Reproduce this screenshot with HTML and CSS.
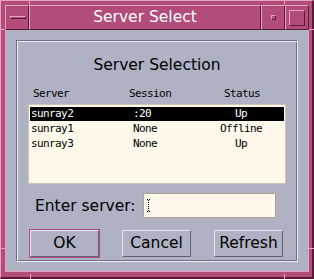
FILE: index.html
```html
<!DOCTYPE html>
<html>
<head>
<meta charset="utf-8">
<link rel="stylesheet" href="styles.css">
</head>
<body>
<div class="frame">
  <div class="titlebar">
    <div class="seg menu"><span class="menu-bar"></span></div>
    <div class="seg title">Server Select</div>
    <div class="seg min"><span class="min-icon"></span></div>
    <div class="seg max"><span class="max-icon"></span></div>
  </div>
  <div class="client">
    <div class="group">
      <div class="heading">Server Selection</div>
      <div class="table">
        <div class="thead"><span>Server</span><span>Session</span><span class="st">Status</span></div>
        <div class="list">
          <div class="row sel"><span>sunray2</span><span>:20</span><span class="st">Up</span></div>
          <div class="row"><span>sunray1</span><span>None</span><span class="st">Offline</span></div>
          <div class="row"><span>sunray3</span><span>None</span><span class="st">Up</span></div>
        </div>
      </div>
      <div class="enter">
        <span class="label">Enter server:</span>
        <div class="input">
          <svg class="caret" width="5" height="13" viewBox="0 0 5 13">
            <rect x="1" y="0" width="1" height="1" fill="#000"/>
            <rect x="3" y="0" width="1" height="1" fill="#000"/>
            <rect x="2" y="1" width="1" height="1" fill="#000"/>
            <rect x="2" y="3" width="1" height="1" fill="#000"/>
            <rect x="2" y="5" width="1" height="1" fill="#000"/>
            <rect x="2" y="7" width="1" height="1" fill="#000"/>
            <rect x="2" y="9" width="1" height="1" fill="#000"/>
            <rect x="2" y="11" width="1" height="1" fill="#000"/>
            <rect x="1" y="12" width="1" height="1" fill="#000"/>
            <rect x="3" y="12" width="1" height="1" fill="#000"/>
          </svg>
        </div>
      </div>
      <div class="buttons">
        <div class="default"><button class="btn">OK</button></div>
        <button class="btn">Cancel</button>
        <button class="btn refresh">Refresh</button>
      </div>
    </div>
  </div>
  <span class="notch v n-top1"></span>
  <span class="notch v n-top2"></span>
  <span class="notch h n-left1"></span>
  <span class="notch h n-left2"></span>
  <span class="notch h n-right1"></span>
  <span class="notch h n-right2"></span>
  <span class="notch v n-bot1"></span>
  <span class="notch v n-bot2"></span>
</div>
</body>
</html>
```

FILE: styles.css
```css
html, body {
  margin: 0;
  padding: 0;
  background: #b24c7a;
}

.frame {
  position: relative;
  box-sizing: border-box;
  width: 314px;
  height: 279px;
  background: #b24c7a;
  border-top: 1px solid #e8a3c4;
  border-left: 1px solid #e8a3c4;
  border-right: 2px solid #5a1b3b;
  border-bottom: 2px solid #5a1b3b;
  padding: 4px 3px 5px 4px;
  font-family: "DejaVu Sans", sans-serif;
}

.titlebar {
  display: flex;
  height: 25px;
}

.seg {
  box-sizing: border-box;
  height: 25px;
  border-top: 1px solid #e8a3c4;
  border-left: 1px solid #e8a3c4;
  border-bottom: 1px solid #5a1b3b;
  border-right: 1px solid #5a1b3b;
  background: #b24c7a;
}

.menu {
  width: 24px;
  display: flex;
  align-items: center;
  padding-left: 4px;
}

.menu-bar {
  box-sizing: border-box;
  width: 16px;
  height: 3px;
  border-top: 1px solid #e8a3c4;
  border-left: 1px solid #e8a3c4;
  border-bottom: 1px solid #5a1b3b;
  border-right: 1px solid #5a1b3b;
}

.title {
  flex: 1;
  color: #ffffff;
  font-size: 15.5px;
  line-height: 21px;
  padding-top: 1px;
  text-align: center;
  white-space: nowrap;
}

.min, .max {
  width: 24px;
  display: flex;
  align-items: center;
  justify-content: center;
}

.min-icon {
  box-sizing: border-box;
  width: 5px;
  height: 5px;
  border-top: 1px solid #e8a3c4;
  border-left: 1px solid #e8a3c4;
  border-bottom: 1px solid #5a1b3b;
  border-right: 1px solid #5a1b3b;
}

.max-icon {
  box-sizing: border-box;
  width: 16px;
  height: 16px;
  border-top: 1px solid #e8a3c4;
  border-left: 1px solid #e8a3c4;
  border-bottom: 1px solid #5a1b3b;
  border-right: 1px solid #5a1b3b;
}

.client {
  box-sizing: border-box;
  height: 242px;
  background: #aeb2c3;
  border-left: 1px solid #e8a3c4;
  border-right: 1px solid #e8a3c4;
  border-bottom: 1px solid #e8a3c4;
  padding: 10px 0 0 10px;
}

.group {
  box-sizing: border-box;
  width: 282px;
  height: 222px;
  border-top: 1px solid #6c6f7c;
  border-left: 1px solid #6c6f7c;
  border-bottom: 1px solid #eceef3;
  border-right: 1px solid #eceef3;
  box-shadow: inset 1px 1px 0 #eceef3, inset -1px -1px 0 #6c6f7c;
}

.heading {
  margin-top: 14px;
  font-size: 15.5px;
  line-height: 20px;
  text-align: center;
  color: #000;
}

.table {
  margin: 12px 0 0 11px;
  width: 258px;
  font-family: "DejaVu Sans Mono", monospace;
  font-size: 11px;
  letter-spacing: -0.6px;
  color: #000;
}

.thead {
  display: grid;
  grid-template-columns: 96px 84px 58px;
  padding-left: 5px;
  height: 14px;
  line-height: 14px;
}

.st {
  text-align: center;
}

.list {
  box-sizing: border-box;
  margin-top: 3px;
  height: 80px;
  background: #fff8ea;
  border: 1px solid #cdc6b6;
  padding: 2px 1px;
}

.row {
  display: grid;
  grid-template-columns: 102px 79px 58px;
  padding-left: 1px;
  height: 14px;
  line-height: 14px;
  margin-bottom: 1px;
}

.row.sel {
  background: #000;
  color: #fff;
}

.enter {
  display: flex;
  align-items: center;
  margin-top: 9px;
  height: 25px;
}

.label {
  width: 108px;
  margin-left: 18px;
  font-size: 15.5px;
  color: #000;
  white-space: nowrap;
}

.input {
  box-sizing: border-box;
  width: 133px;
  height: 25px;
  background: #fff8ea;
  border: 1px solid #aaa596;
  display: flex;
  align-items: center;
  padding-left: 2px;
}

.caret {
  display: block;
}

.buttons {
  display: flex;
  align-items: center;
  gap: 22px;
  margin: 11px 0 0 12px;
}

.default {
  border: 1px solid #b24c7a;
  display: flex;
}

.btn {
  box-sizing: border-box;
  width: 69px;
  height: 27px;
  margin: 0;
  padding: 0;
  background: #aeb2c3;
  border-top: 1px solid #e6e7ee;
  border-left: 1px solid #e6e7ee;
  border-bottom: 1px solid #5f6270;
  border-right: 1px solid #5f6270;
  font-family: "DejaVu Sans", sans-serif;
  font-size: 15.5px;
  color: #000;
  line-height: 25px;
  text-align: center;
}

.refresh {
  margin-left: 1px;
}

.notch {
  position: absolute;
  background: #e8a3c4;
}

.notch.v {
  width: 1px;
  height: 5px;
}

.notch.h {
  width: 5px;
  height: 1px;
}

.n-top1 { left: 28px; top: -1px; }
.n-top2 { left: 283px; top: -1px; }
.n-left1 { left: -1px; top: 28px; }
.n-left2 { left: -1px; top: 247px; }
.n-right1 { right: -2px; top: 28px; }
.n-right2 { right: -2px; top: 247px; }
.n-bot1 { left: 29px; bottom: -2px; }
.n-bot2 { left: 283px; bottom: -2px; }
```
